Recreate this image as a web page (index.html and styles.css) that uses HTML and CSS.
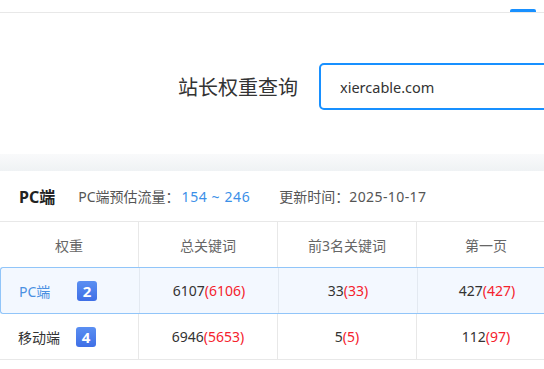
FILE: index.html
```html
<!DOCTYPE html>
<html lang="zh-CN">
<head>
    <meta charset="UTF-8">
    <title>站长权重查询</title>
    <link rel="stylesheet" href="styles.css">
</head>
<body>
    <div class="topbar">
        <span class="tab-ink"></span>
    </div>

    <div class="search">
        <label class="search-label" for="domain">站长权重查询</label>
        <input class="search-input" id="domain" type="text" value="xiercable.com">
    </div>

    <div class="band"></div>

    <div class="card">
        <div class="card-head">
            <span class="card-title">PC端</span>
            <span class="meta">PC端预估流量：<span class="flow">154 ~ 246</span></span>
            <span class="meta">更新时间：<span class="num">2025-10-17</span></span>
        </div>

        <div class="grid">
            <div class="row row-head">
                <div class="cell">权重</div>
                <div class="cell">总关键词</div>
                <div class="cell">前3名关键词</div>
                <div class="cell">第一页</div>
            </div>
            <div class="row row-active">
                <div class="cell cell-name"><span class="name">PC端</span><span class="badge">2</span></div>
                <div class="cell">6107<span class="red">(6106)</span></div>
                <div class="cell">33<span class="red">(33)</span></div>
                <div class="cell">427<span class="red">(427)</span></div>
            </div>
            <div class="row">
                <div class="cell cell-name"><span class="name">移动端</span><span class="badge">4</span></div>
                <div class="cell">6946<span class="red">(5653)</span></div>
                <div class="cell">5<span class="red">(5)</span></div>
                <div class="cell">112<span class="red">(97)</span></div>
            </div>
        </div>
    </div>
</body>
</html>
```

FILE: styles.css
```css
/* page */
body {
    margin: 0;
    overflow: hidden;
    background: #fff;
    font-family: "Noto Sans", "Noto Sans CJK SC", sans-serif;
    color: #333;
}

/* top tab strip */
.topbar {
    height: 12px;
    border-bottom: 1px solid #e8e8e8;
    display: flex;
    align-items: flex-end;
}

.tab-ink {
    width: 26px;
    height: 3px;
    margin-left: 510px;
    background: #1890ff;
    border-radius: 2px 2px 0 0;
}

/* search */
.search {
    display: flex;
    align-items: center;
    gap: 21px;
    padding: 50px 0 44px 178px;
    overflow: hidden;
}

.search-label {
    font-size: 20px;
    color: #333;
    white-space: nowrap;
    flex-shrink: 0;
}

.search-input {
    flex-shrink: 0;
    width: 320px;
    height: 47px;
    box-sizing: border-box;
    border: 2px solid #1890ff;
    border-radius: 5px;
    padding: 0 19px;
    font-family: "Noto Sans", "Noto Sans CJK SC", sans-serif;
    font-size: 14.5px;
    color: #333;
    outline: none;
}

.band {
    height: 17px;
    background: linear-gradient(#f9fafb, #eff2f4);
}

/* result card */
.card {
    overflow: hidden;
}

.card-head {
    display: flex;
    align-items: center;
    height: 50px;
    padding-left: 19px;
    border-bottom: 1px solid #e8e8e8;
    font-size: 14px;
}

.card-title {
    font-size: 16px;
    font-weight: bold;
    color: #222;
    margin-right: 23px;
}

.meta {
    color: #555;
    margin-right: 29px;
    white-space: nowrap;
}

.flow {
    color: #3b8fe8;
    margin-left: 2px;
    letter-spacing: 0.6px;
}

.num {
    letter-spacing: 0.4px;
}

.grid {
    width: 556px;
}

.row {
    display: grid;
    grid-template-columns: repeat(4, 139px);
    height: 45px;
    border-bottom: 1px solid #e8e8e8;
    font-size: 14px;
}

.row-head {
    color: #666;
    border-bottom: none;
}

.row-active {
    background: #f3f8ff;
    border: 1px solid #91c5f9;
    border-right: none;
    border-radius: 3px 0 0 3px;
    box-sizing: border-box;
    height: 47px;
}

.cell {
    display: flex;
    align-items: center;
    justify-content: center;
    border-right: 1px solid #e8e8e8;
}

.row-active .cell {
    border-right-color: #e3e9f1;
}

.cell-name {
    justify-content: flex-start;
    padding-left: 18px;
}

.name {
    width: 58px;
}

.row-active .name {
    color: #4a90e2;
}

.badge {
    width: 20px;
    height: 20px;
    border-radius: 3px;
    background: linear-gradient(#5a8ff2, #3f6fe6);
    color: #fff;
    font-weight: bold;
    font-size: 15px;
    display: flex;
    align-items: center;
    justify-content: center;
}

.red {
    color: #f5222d;
}
```
